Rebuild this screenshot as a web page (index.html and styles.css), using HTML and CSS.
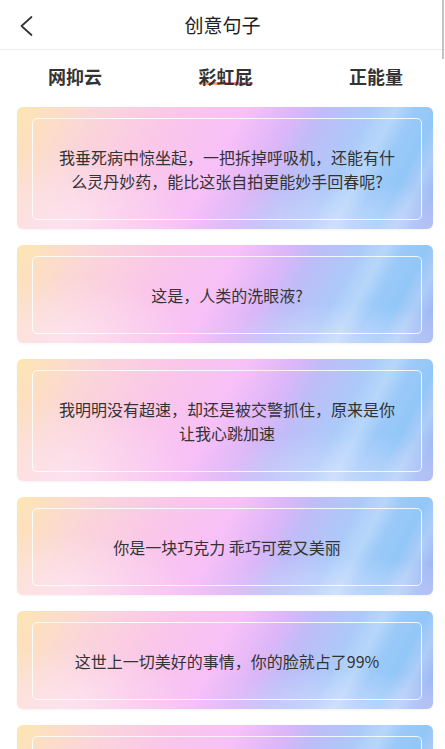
FILE: index.html
```html
<!DOCTYPE html>
<html lang="zh-CN">
<head>
<meta charset="utf-8">
<title>创意句子</title>
<link rel="stylesheet" href="styles.css">
</head>
<body>
<div class="page">
  <header class="topbar">
    <span class="back">
      <svg width="16" height="22" viewBox="0 0 16 22"><path d="M12.5 2 L2.5 11 L12.5 20" fill="none" stroke="#333" stroke-width="1.7" stroke-linecap="round" stroke-linejoin="round"/></svg>
    </span>
    <h1 class="title">创意句子</h1>
  </header>
  <nav class="tabs">
    <span class="tab">网抑云</span>
    <span class="tab active"><span class="tab-text">彩虹屁</span></span>
    <span class="tab">正能量</span>
  </nav>
  <main class="list">
    <div class="card"><div class="inner">我垂死病中惊坐起，一把拆掉呼吸机，还能有什么灵丹妙药，能比这张自拍更能妙手回春呢?</div></div>
    <div class="card"><div class="inner">这是，人类的洗眼液?</div></div>
    <div class="card"><div class="inner">我明明没有超速，却还是被交警抓住，原来是你让我心跳加速</div></div>
    <div class="card"><div class="inner">你是一块巧克力 乖巧可爱又美丽</div></div>
    <div class="card"><div class="inner">这世上一切美好的事情，你的脸就占了99%</div></div>
    <div class="card"><div class="inner">你的眼睛里有星辰大海</div></div>
  </main>
</div>
<div class="scroll-thumb"></div>
</body>
</html>
```
FILE: styles.css
```css
html, body {
  margin: 0;
  padding: 0;
  background: #ffffff;
  scrollbar-width: none;
}
body::-webkit-scrollbar { display: none; }

body {
  font-family: "Noto Sans CJK SC", "Noto Sans", sans-serif;
  color: #333;
}

.page {
  width: 445px;
}

.topbar {
  height: 49px;
  border-bottom: 1px solid #eeeeee;
  display: flex;
  align-items: center;
  justify-content: center;
  position: relative;
}

.back {
  position: absolute;
  left: 19px;
  top: 15px;
  width: 16px;
  height: 22px;
  display: flex;
}

.title {
  margin: 0;
  font-size: 19px;
  font-weight: 400;
  color: #222;
  line-height: 24px;
}

.tabs {
  height: 57px;
  box-sizing: border-box;
  padding: 14px 42px 0 48px;
  display: flex;
  justify-content: space-between;
  align-items: flex-start;
}

.tab {
  font-size: 18px;
  font-weight: 700;
  line-height: 24px;
  color: #333;
  position: relative;
}

.tab-text {
  position: relative;
  z-index: 1;
}

.tab.active::after {
  content: "";
  position: absolute;
  left: 0;
  right: 0;
  top: 18px;
  height: 3px;
  border-radius: 2px;
  background: linear-gradient(90deg, #f7a86f, #ee7a6e 60%, #e6768c);
  opacity: 0.85;
}

.list {
  display: flex;
  flex-direction: column;
  gap: 16px;
  padding: 0 12px 20px 17px;
}

.card {
  border-radius: 6px;
  padding: 10.5px 11px 9.5px 15px;
  background:
    linear-gradient(118deg, rgba(255,255,255,0) 74%, rgba(255,255,255,0.22) 79%, rgba(255,255,255,0) 83%, rgba(255,255,255,0) 88%, rgba(255,255,255,0.2) 92%, rgba(255,255,255,0) 96%),
    radial-gradient(ellipse 30% 60% at 12% 95%, rgba(255,240,250,0.55), rgba(255,255,255,0)),
    radial-gradient(ellipse 35% 40% at 78% 100%, rgba(220,225,255,0.6), rgba(255,255,255,0)),
    linear-gradient(118deg, #fde6b1 0%, #fbd6d8 16%, #fac6ea 34%, #f7c0f8 48%, #dcb6f8 58%, #c0bcf8 64%, #a8ccf9 76%, #92c7f8 88%, #a8b3f1 100%);
  box-shadow: 0 1px 3px rgba(120, 110, 180, 0.08);
}

.inner {
  border: 1px solid rgba(255, 255, 255, 0.85);
  border-radius: 5px;
  padding: 26px 24px;
  font-size: 16px;
  line-height: 24px;
  color: #333;
  text-align: center;
}

.scroll-thumb {
  position: fixed;
  right: 1px;
  top: 0;
  width: 2px;
  height: 59px;
  background: #c4c4c4;
}
```
